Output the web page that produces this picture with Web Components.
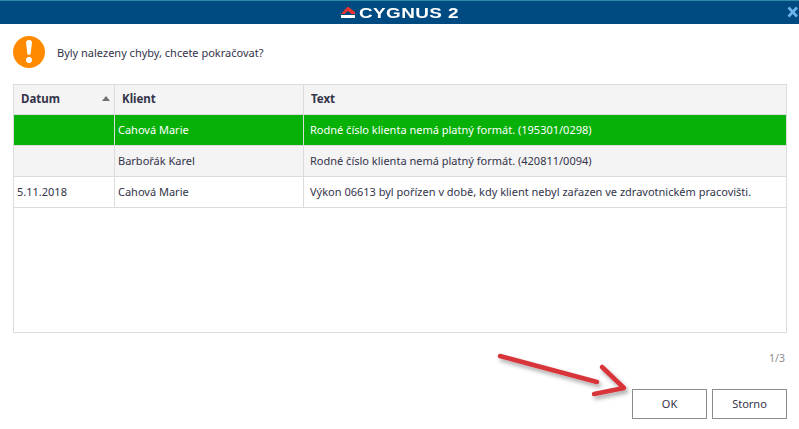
<!DOCTYPE html>
<html>
<head>
<meta charset="utf-8">
<style>
html, body { margin: 0; padding: 0; background: #fff; }
</style>
</head>
<body>
<cy-dialog>
	<cy-titlebar slot="title"></cy-titlebar>
	<cy-message slot="message">Byly nalezeny chyby, chcete pokračovat?</cy-message>
	<cy-grid slot="grid">
		<cy-row selected><span>&nbsp;</span><span>Cahová Marie</span><span>Rodné číslo klienta nemá platný formát. (195301/0298)</span></cy-row>
		<cy-row alt><span>&nbsp;</span><span>Barbořák Karel</span><span>Rodné číslo klienta nemá platný formát. (420811/0094)</span></cy-row>
		<cy-row><span>5.11.2018</span><span>Cahová Marie</span><span>Výkon 06613 byl pořízen v době, kdy klient nebyl zařazen ve zdravotnickém pracovišti.</span></cy-row>
	</cy-grid>
	<cy-button slot="buttons">OK</cy-button>
	<cy-button slot="buttons">Storno</cy-button>
</cy-dialog>
<script>
(function() {
	const FONT = '"Noto Sans", "Liberation Sans", sans-serif';

	class CyTitlebar extends HTMLElement {
		constructor() {
			super();
			this.attachShadow({mode: "open"}).innerHTML = `
				<style>
				:host {
					display: flex;
					justify-content: center;
					align-items: center;
					position: relative;
					box-sizing: border-box;
					height: 24px;
					background: #004a82;
					border-top: 1px solid #2a8ea6;
				}
				.logo { display: flex; align-items: center; gap: 4px; }
				.name {
					font: bold 14px/14px "Liberation Sans", sans-serif;
					color: #fff;
					letter-spacing: 0.3px;
					display: inline-block;
					transform: scaleX(1.35);
					transform-origin: left center;
					width: 100px;
					white-space: nowrap;
				}
				.close { position: absolute; right: 0; top: 4px; width: 14px; height: 14px; }
				</style>
				<div class="logo">
					<svg width="14" height="11" viewBox="0 0 14 11">
						<path d="M0 7 L6.5 0 H7.5 L14 5 V7 H10.5 L7 4 L3.5 7 Z" fill="#e8342e"/>
						<path d="M0 8 H14 V11 H0 Z" fill="#fff"/>
					</svg>
					<span class="name">CYGNUS 2</span>
				</div>
				<svg class="close" viewBox="0 0 14 14">
					<path d="M3.5 2.5 L12 11.5 M12 2.5 L3.5 11.5" stroke="#6db4ee" stroke-width="2.6"/>
				</svg>
			`;
		}
	}

	class CyMessage extends HTMLElement {
		constructor() {
			super();
			this.attachShadow({mode: "open"}).innerHTML = `
				<style>
				:host {
					display: flex;
					align-items: center;
					gap: 12px;
					height: 32px;
					font: 11px ${FONT};
					color: #33334a;
				}
				</style>
				<svg width="32" height="32" viewBox="0 0 32 32">
					<circle cx="16" cy="16" r="16" fill="#ff8a00"/>
					<path d="M13 6.5 Q13 4 16 4 Q19 4 19 6.5 L17.6 18 Q16 20 14.4 18 Z" fill="#fff"/>
					<circle cx="16" cy="24" r="3" fill="#fff"/>
				</svg>
				<slot></slot>
			`;
		}
	}

	class CyGrid extends HTMLElement {
		constructor() {
			super();
			this.attachShadow({mode: "open"}).innerHTML = `
				<style>
				:host {
					display: block;
					box-sizing: border-box;
					height: 249px;
					border: 1px solid #dcdcdc;
					font: 11px ${FONT};
					color: #33334a;
				}
				.head {
					display: grid;
					grid-template-columns: 101px 189px 1fr;
					box-sizing: border-box;
					height: 30px;
					background: #f4f4f4;
					border-bottom: 1px solid #dcdcdc;
					font-weight: bold;
					font-size: 11.5px;
				}
				.head div {
					display: flex;
					align-items: center;
					justify-content: space-between;
					padding: 0 7px 2px;
					border-right: 1px solid #dcdcdc;
				}
				.head div:last-child { border-right: 0; }
				.arrow {
					width: 0; height: 0;
					border-left: 4.5px solid transparent;
					border-right: 4.5px solid transparent;
					border-bottom: 5px solid #707070;
					margin-right: -3px;
				}
				</style>
				<div class="head">
					<div>Datum<span class="arrow"></span></div>
					<div>Klient</div>
					<div>Text</div>
				</div>
				<slot></slot>
			`;
		}
	}

	class CyRow extends HTMLElement {
		constructor() {
			super();
			this.attachShadow({mode: "open"}).innerHTML = `
				<style>
				:host {
					display: grid;
					grid-template-columns: 101px 189px 1fr;
					box-sizing: border-box;
					height: 31px;
					border-bottom: 1px solid #dcdcdc;
					background: #fff;
					color: #33334a;
				}
				:host([alt]) { background: #f4f4f4; }
				:host([selected]) { background: #07b107; color: #fff; }
				::slotted(span) {
					display: flex;
					align-items: center;
					padding: 0 0 2px 3px;
					border-right: 1px solid #dcdcdc;
					white-space: nowrap;
				}
				::slotted(span:last-child) { border-right: 0; padding-left: 6px; }
				</style>
				<slot></slot>
			`;
		}
	}

	class CyButton extends HTMLElement {
		constructor() {
			super();
			this.attachShadow({mode: "open"}).innerHTML = `
				<style>
				:host {
					display: flex;
					align-items: center;
					justify-content: center;
					box-sizing: border-box;
					width: 75px;
					height: 30px;
					padding-bottom: 2px;
					border: 1px solid #8c8c8c;
					background: #fff;
					font: 11px ${FONT};
					color: #33334a;
				}
				</style>
				<slot></slot>
			`;
		}
	}

	class CyDialog extends HTMLElement {
		constructor() {
			super();
			this.attachShadow({mode: "open"}).innerHTML = `
				<style>
				:host {
					display: block;
					position: relative;
					width: 799px;
					height: 429px;
					overflow: hidden;
					background: #fff;
				}
				.body { padding: 12px 12px 0 13px; display: flex; flex-direction: column; }
				.grid { margin-top: 16px; }
				.pager {
					margin-top: 17px;
					height: 16px;
					text-align: right;
					padding-right: 2px;
					font: 10.5px/16px ${FONT};
					color: #8a8a8a;
				}
				.buttons { display: flex; justify-content: flex-end; gap: 5px; margin-top: 23px; }
				.annotation { position: absolute; left: 490px; top: 345px; }
				</style>
				<slot name="title"></slot>
				<div class="body">
					<slot name="message"></slot>
					<div class="grid"><slot name="grid"></slot></div>
					<div class="pager">1/3</div>
					<div class="buttons"><slot name="buttons"></slot></div>
				</div>
				<svg class="annotation" width="150" height="60" viewBox="490 345 150 60">
					<defs>
						<filter id="sh" x="-10%" y="-30%" width="120%" height="170%">
							<feDropShadow dx="2" dy="3" stdDeviation="2" flood-color="#000" flood-opacity="0.35"/>
						</filter>
					</defs>
					<g filter="url(#sh)" fill="none" stroke="#d8343a" stroke-width="4.5" stroke-linecap="round" stroke-linejoin="round">
						<path d="M500 356 L597 382"/>
						<path d="M602 367 L624 388 L594 394"/>
					</g>
				</svg>
			`;
		}
	}

	customElements.define("cy-titlebar", CyTitlebar);
	customElements.define("cy-message", CyMessage);
	customElements.define("cy-grid", CyGrid);
	customElements.define("cy-row", CyRow);
	customElements.define("cy-button", CyButton);
	customElements.define("cy-dialog", CyDialog);
})();
</script>
</body>
</html>
